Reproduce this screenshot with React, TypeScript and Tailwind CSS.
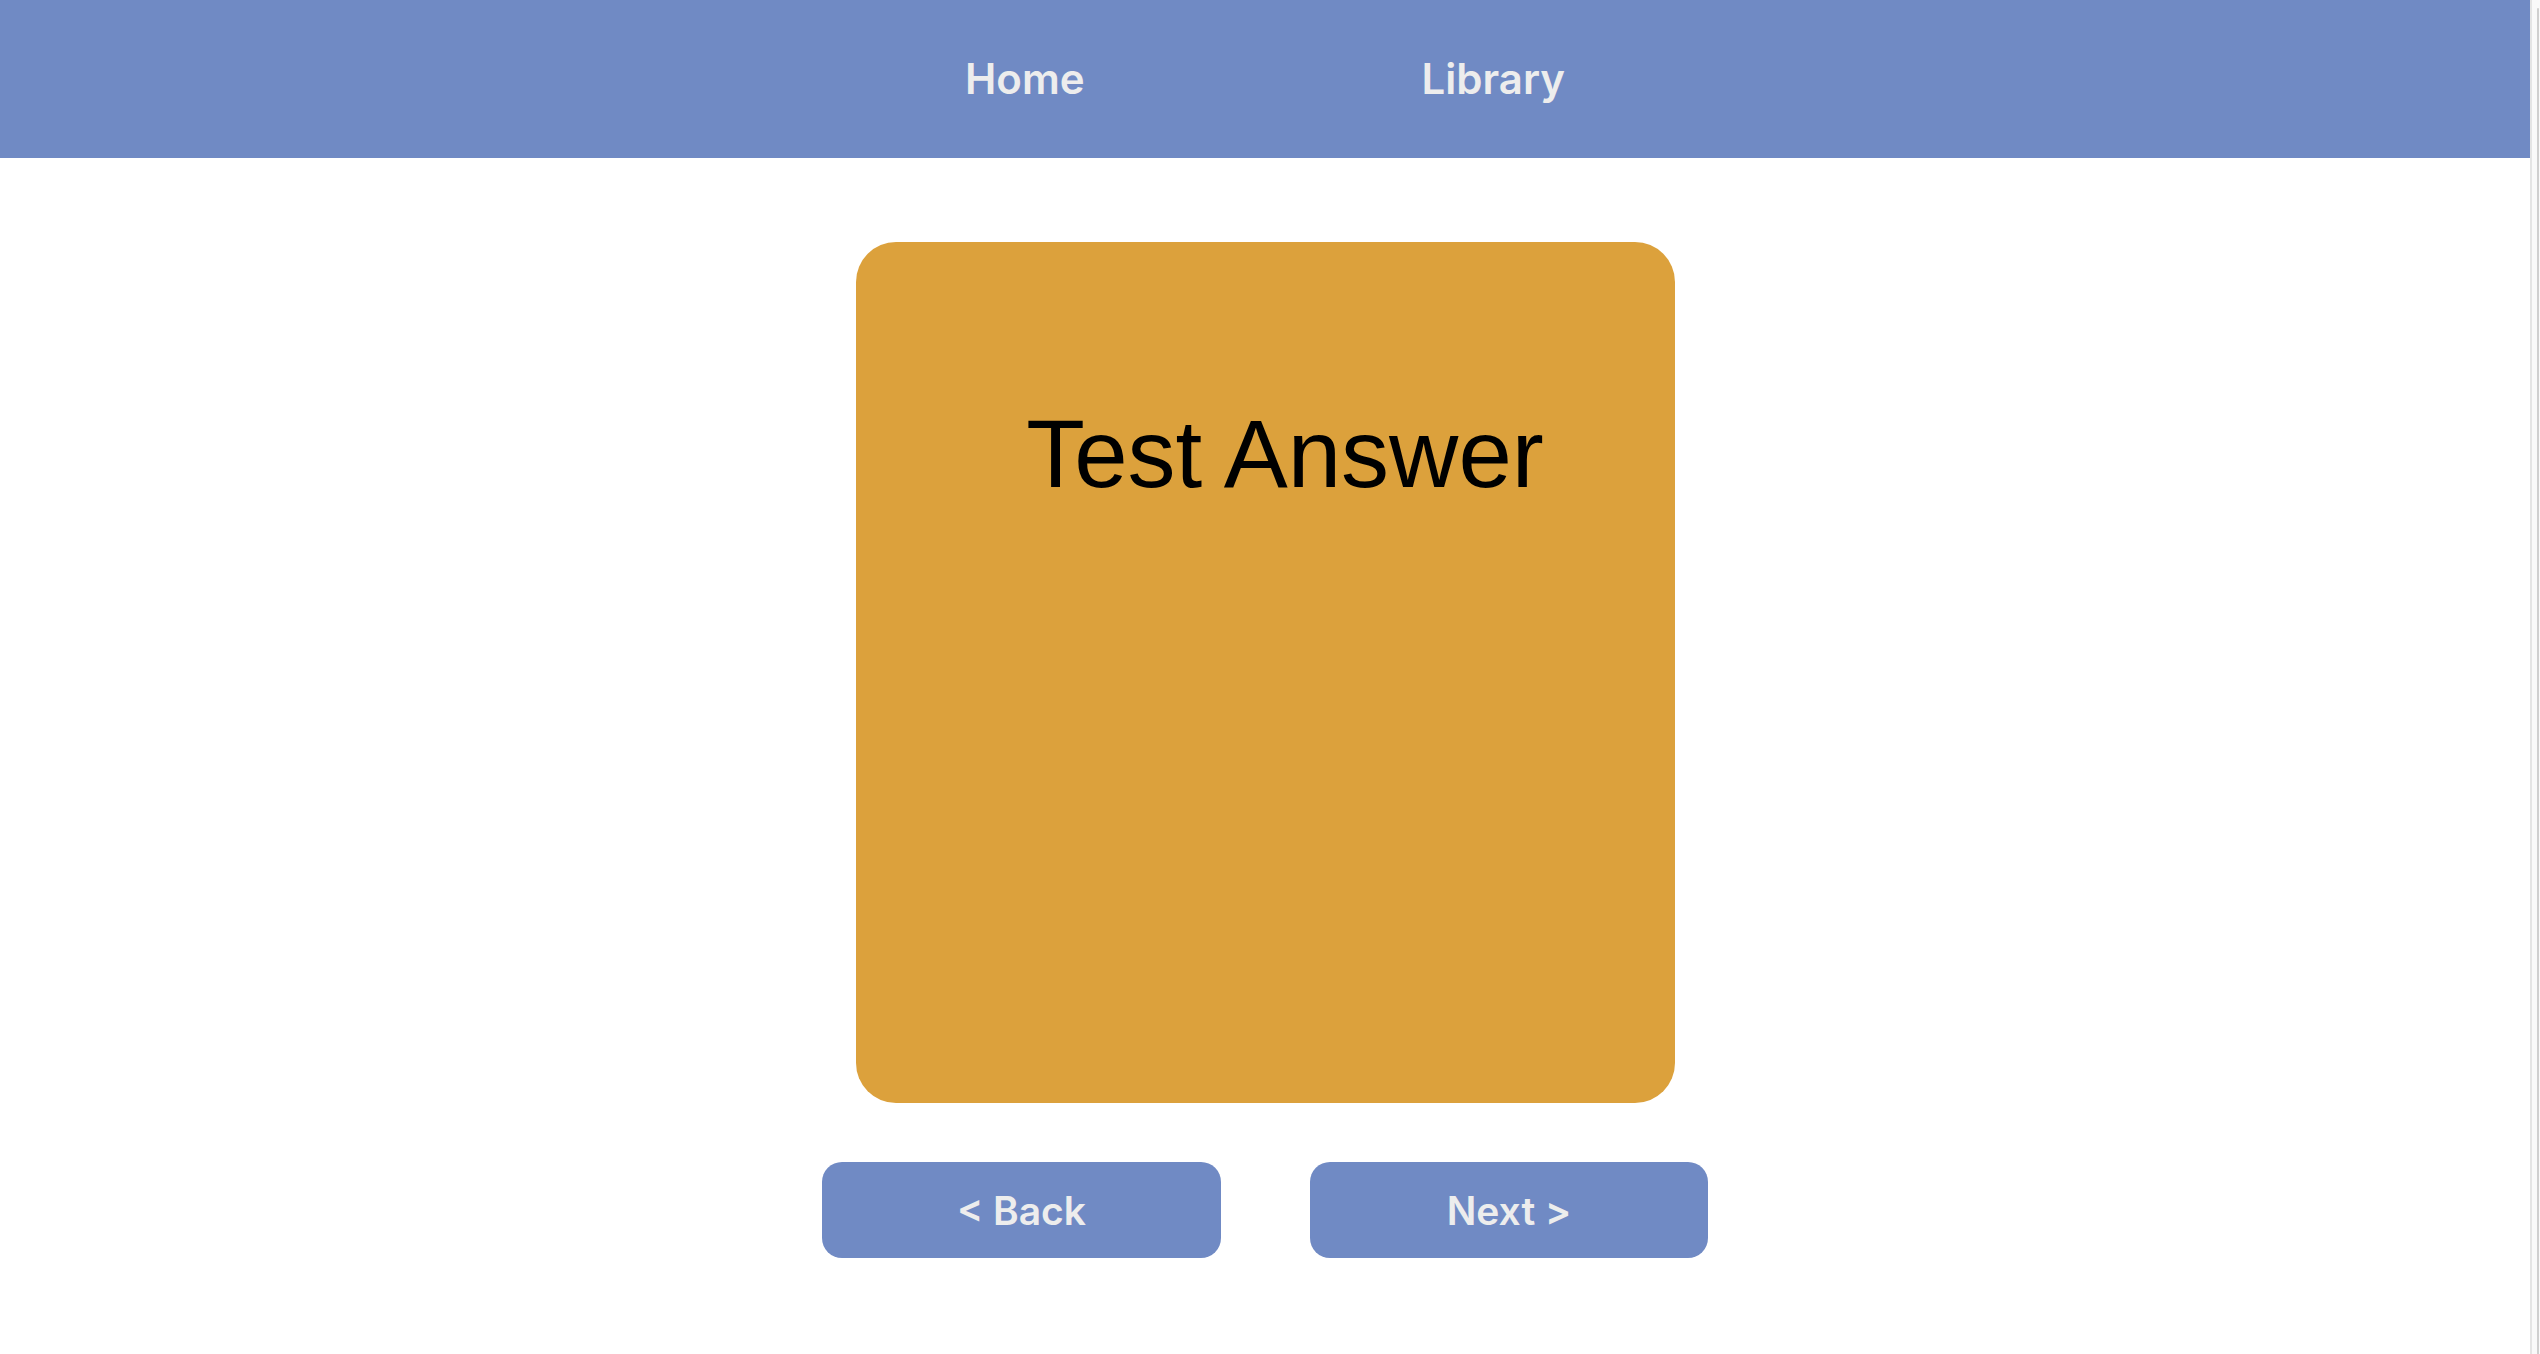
import React from "react";

export default function App() {
  return (
    <div className="flex min-h-screen w-full bg-white">
      <div className="flex min-w-0 flex-1 flex-col">
        <nav className="flex h-[158px] items-center justify-center gap-[337px] bg-[#708ac4] font-['Inter',sans-serif]">
          <a className="text-[42px] font-semibold leading-none text-[#ededed]">Home</a>
          <a className="text-[42px] font-semibold leading-none text-[#ededed]">Library</a>
        </nav>
        <main className="flex flex-col items-center">
          <div className="mt-[84px] flex h-[861px] w-[819px] flex-col items-center rounded-[40px] bg-[#dca13c] pl-[40px]">
            <p className="mt-[164px] font-['Liberation_Sans','Arial',sans-serif] text-[96px] leading-none text-black">
              Test Answer
            </p>
          </div>
          <div className="mt-[59px] flex gap-[89px] font-['Inter',sans-serif]">
            <button className="flex h-[96px] w-[399px] items-center justify-center rounded-[20px] bg-[#708ac4] text-[39px] font-semibold leading-none text-[#ededed]">
              &lt; Back
            </button>
            <button className="flex h-[96px] w-[398px] items-center justify-center rounded-[20px] bg-[#708ac4] text-[39px] font-semibold leading-none text-[#ededed]">
              Next &gt;
            </button>
          </div>
        </main>
      </div>
      <div className="relative w-[10px] shrink-0 border-l-2 border-[#e4e4e4] bg-[#f9f9f9]">
        <div className="absolute right-[1px] top-[8px] bottom-0 w-[2px] rounded-t-full bg-[#cfcfcf]" />
      </div>
    </div>
  );
}
